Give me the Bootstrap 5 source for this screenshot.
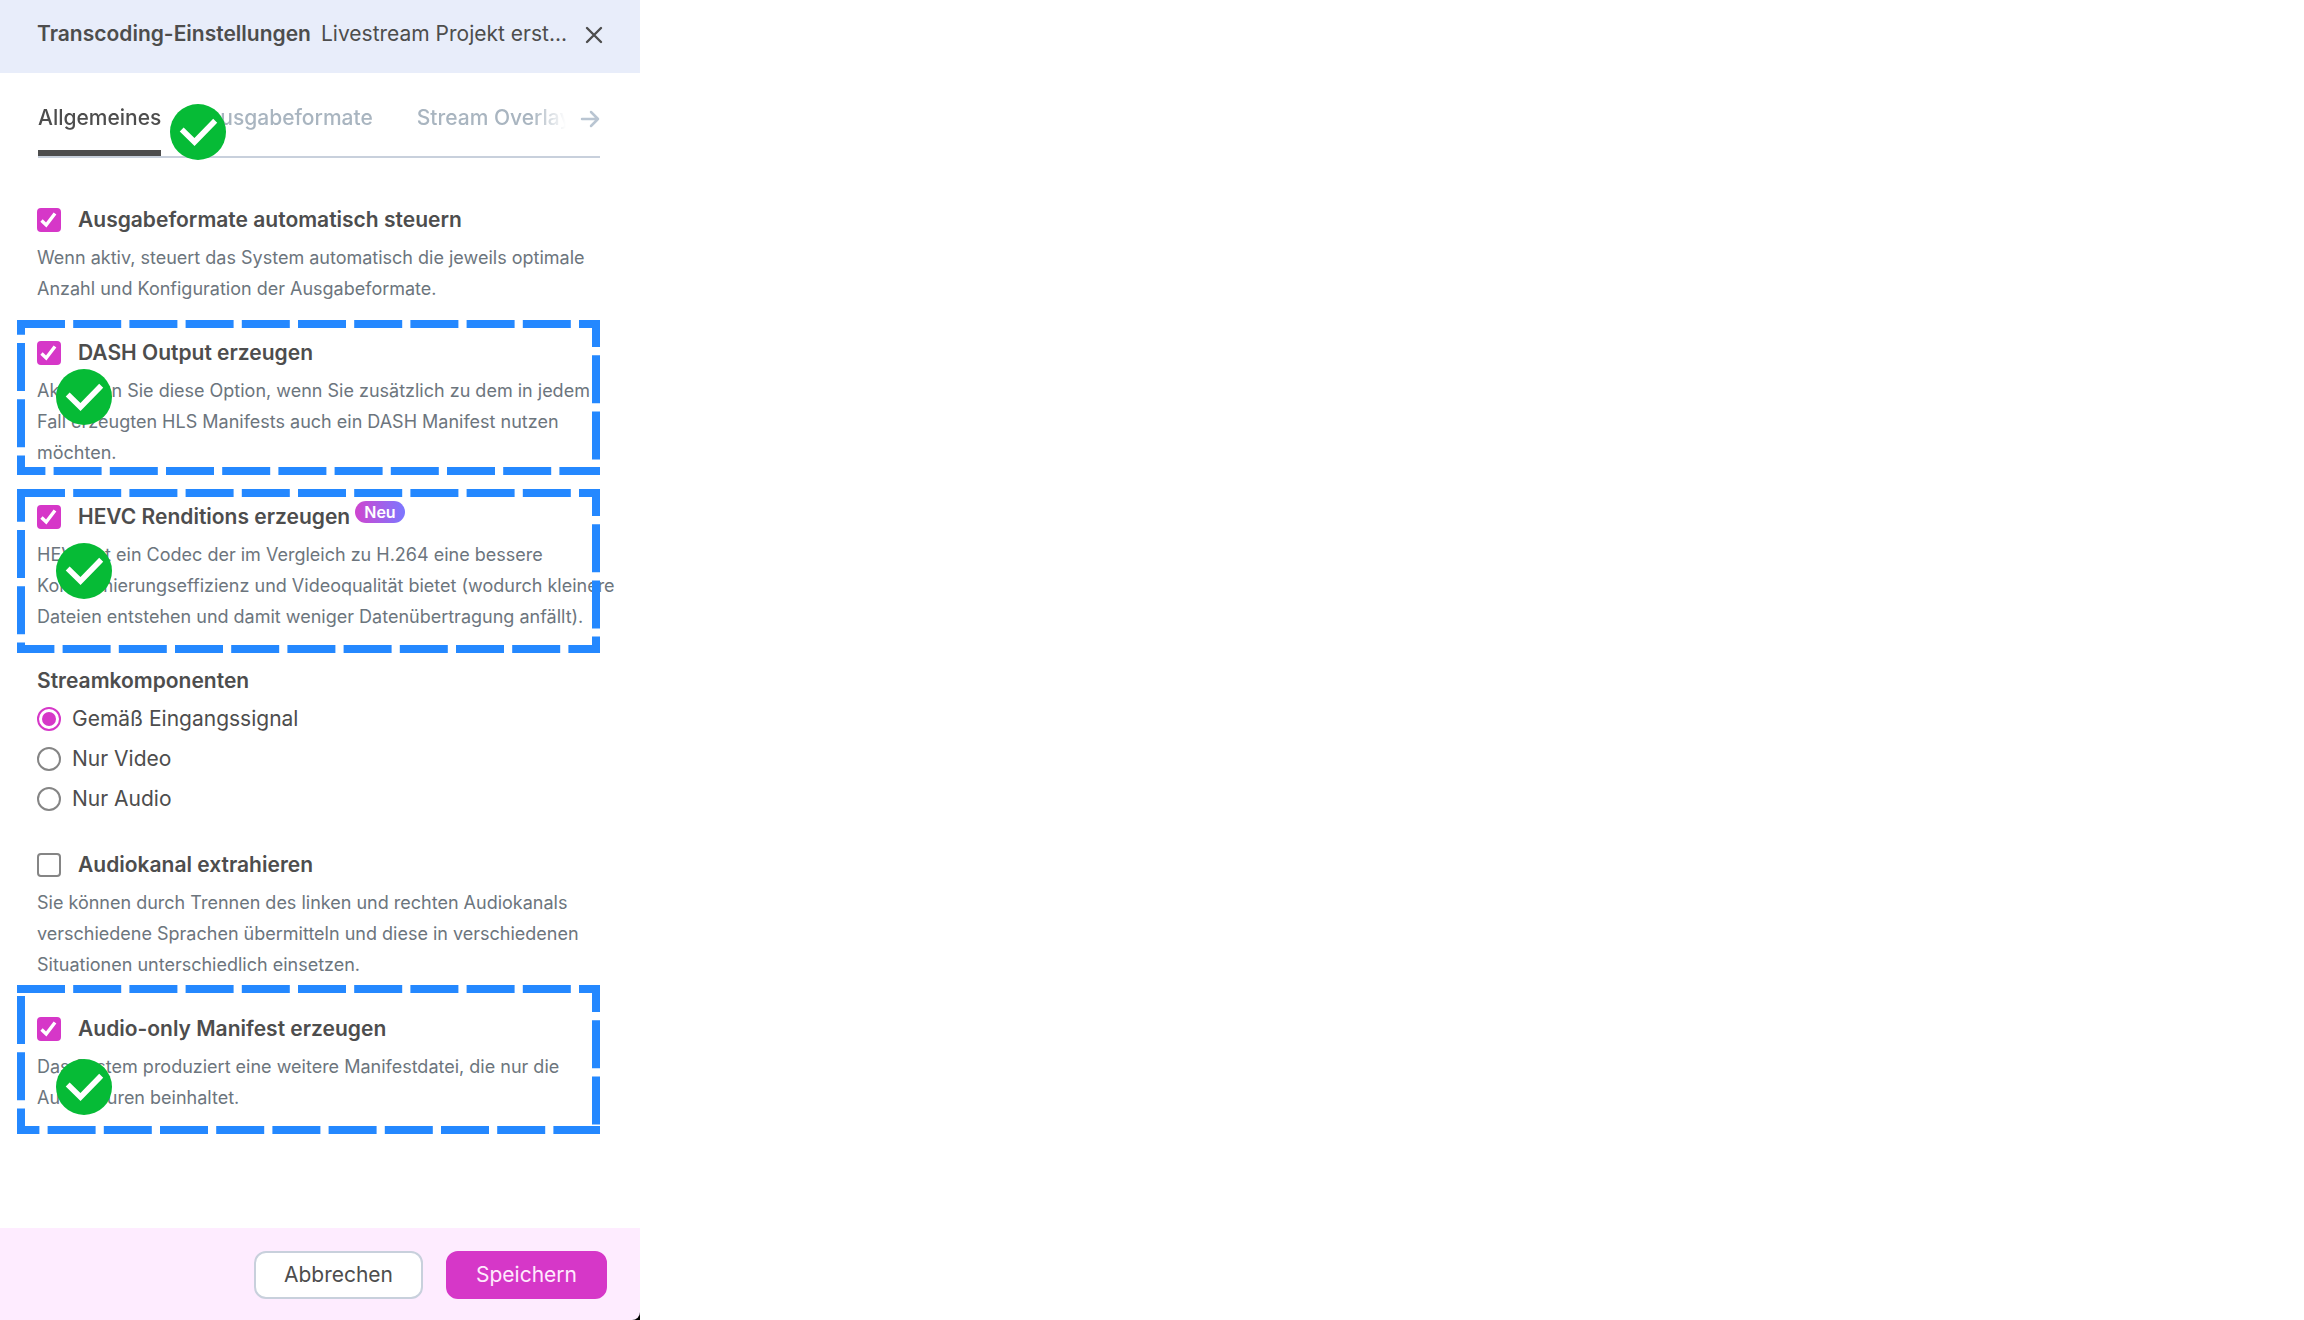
<!DOCTYPE html>
<html lang="de">
<head>
<meta charset="utf-8">
<meta name="viewport" content="width=device-width, initial-scale=1">
<title>Transcoding-Einstellungen</title>
<link href="https://cdn.jsdelivr.net/npm/bootstrap@5.3.0/dist/css/bootstrap.min.css" rel="stylesheet">
<style>
  :root { --ink: #4d4d4d; --muted: #6c757d; --pink: #d637c8; --line: #c8d0dc; }
  body { font-family: Inter, "Liberation Sans", sans-serif; font-size: 21px; line-height: 32px; color: var(--ink); background: #fff; }
  .settings-panel { max-width: 640px; }
  .panel-head { background: #e8edfa; padding: 18px 36px 23px 37px; gap: 10px; }
  .panel-head h1 { font-size: 21px; line-height: 32px; }
  .icon-btn { color: var(--ink); line-height: 0; }
  .tab-strip { margin: 25px 40px 0 38px; border-bottom: 2px solid var(--line); white-space: nowrap; }
  .tab-strip .nav-link { padding: 4px 0 16px; font-weight: 500; color: #a9b5c0; border-bottom: 6px solid transparent; }
  .tab-strip .nav-link.active { color: var(--ink); border-color: #4d4d4d; }
  .tab-clip { gap: 44px; flex: 1 1 0; min-width: 0; overflow: hidden; -webkit-mask-image: linear-gradient(to left, transparent 34px, #000 68px); mask-image: linear-gradient(to left, transparent 34px, #000 68px); }
  .tab-next { color: #b9c5d2; padding: 4px 0 23px; }
  .panel-main { padding: 46px 22px 96px 37px; }
  .option { margin-bottom: 33px; }
  .option p { margin: 6px 0 0; font-size: 18px; line-height: 31px; color: var(--muted); }
  .option-row { gap: 17px; }
  .choice-row { gap: 11px; margin-bottom: 8px; }
  .choices { margin-bottom: 34px; }
  .choices legend { font-size: 21px; line-height: 32px; margin-bottom: 6px; float: none; }
  .form-check-input { width: 24px; height: 24px; margin: 0; flex: none; border: 2px solid #858585; }
  .form-check-input[type=checkbox] { border-radius: 4px; }
  .form-check-input:checked { background-color: var(--pink); border-color: var(--pink); }
  .form-check-input:checked[type=checkbox] { background-size: 24px 24px; background-image: url("data:image/svg+xml,%3Csvg xmlns='http://www.w3.org/2000/svg' viewBox='0 0 24 24'%3E%3Cpath d='M4.500 12.500l4.700 4.500L18 5.500' fill='none' stroke='%23fff' stroke-width='3.400'/%3E%3C/svg%3E"); }
  .form-check-input:checked[type=radio] { background-color: #fff; background-size: 24px 24px; background-image: url("data:image/svg+xml,%3Csvg xmlns='http://www.w3.org/2000/svg' viewBox='0 0 24 24'%3E%3Ccircle cx='12' cy='12' r='7' fill='%23d637c8'/%3E%3C/svg%3E"); }
  .new-pill { font-size: 16px; line-height: 22px; padding: 0 9px; margin: -11px 0 0 -12px; background: linear-gradient(90deg, #cf45cf, #7c77ff); }
  .frame { left: -20px; width: 583px; max-width: calc(100% + 20px); pointer-events: none; }
  .frame rect { fill: none; stroke: #2488ff; stroke-width: 16; stroke-dasharray: 48 8.2; }
  .frame-dash { top: -17px; height: 155px; }
  .frame-hevc { top: -12px; height: 164px; }
  .frame-audio { top: -28px; height: 149px; }
  .tick { width: 56px; height: 56px; left: 19px; }
  .tick-dash { top: 32px; }
  .tick-hevc { top: 42px; }
  .tick-audio { top: 46px; }
  .tick-tab { left: 132px; top: 6px; }
  .panel-foot { background: #000; }
  .foot-bar { background: #feecff; border-bottom-right-radius: 8px; padding: 23px 33px 21px; gap: 23px; }
  .foot-bar .btn { font-size: 21px; line-height: 30px; padding: 7px 28px; border: 2px solid var(--line); border-radius: 12px; color: var(--ink); background: #fff; }
  .foot-bar .btn-save { color: #ffeafd; background: var(--pink); border-color: var(--pink); }
</style>
</head>
<body>
<svg class="d-none" xmlns="http://www.w3.org/2000/svg">
  <symbol id="tick" viewBox="0 0 56 56"><circle cx="28" cy="28" r="28" fill="#06bb36"/><path d="M11.700 25.500L24.500 38L45.200 16.700" fill="none" stroke="#fff" stroke-width="5.600"/></symbol>
</svg>
<div class="settings-panel d-flex flex-column min-vh-100">
  <header class="panel-head d-flex align-items-center">
    <h1 class="fw-semibold mb-0">Transcoding-Einstellungen</h1>
    <span class="text-truncate">Livestream Projekt erst...</span>
    <button type="button" class="icon-btn btn p-0 border-0 ms-auto" aria-label="Schließen">
      <svg width="20" height="20" viewBox="0 0 20 20" fill="none" stroke="currentColor" stroke-width="2.400" stroke-linecap="round"><path d="M3 4L17 18M17 4L3 18"/></svg>
    </button>
  </header>

  <nav class="tab-strip d-flex position-relative">
    <div class="tab-clip d-flex">
      <a class="nav-link active" href="#allgemein">Allgemeines</a>
      <a class="nav-link" href="#formate">Ausgabeformate</a>
      <a class="nav-link" href="#overlays">Stream Overlay</a>
    </div>
    <button type="button" class="tab-next btn border-0 d-flex align-items-center position-absolute end-0 top-0" aria-label="Weitere Tabs">
      <svg width="20" height="31" viewBox="0 0 20 31" fill="none" stroke="currentColor" stroke-width="2.500" stroke-linecap="round" stroke-linejoin="round"><path d="M2 17H18M11 10L18 17L11 24"/></svg>
    </button>
    <svg class="tick tick-tab position-absolute"><use href="#tick"/></svg>
  </nav>

  <main class="panel-main" id="allgemein">
    <section class="option">
      <div class="option-row d-flex align-items-center">
        <input class="form-check-input" type="checkbox" id="auto" checked>
        <label class="fw-semibold" for="auto">Ausgabeformate automatisch steuern</label>
      </div>
      <p>Wenn aktiv, steuert das System automatisch die jeweils optimale Anzahl und Konfiguration der Ausgabeformate.</p>
    </section>

    <section class="option position-relative">
      <div class="option-row d-flex align-items-center">
        <input class="form-check-input" type="checkbox" id="dash" checked>
        <label class="fw-semibold" for="dash">DASH Output erzeugen</label>
      </div>
      <p>Aktivieren Sie diese Option, wenn Sie zusätzlich zu dem in jedem Fall erzeugten HLS Manifests auch ein DASH Manifest nutzen möchten.</p>
      <svg class="frame frame-dash position-absolute"><rect width="100%" height="100%"/></svg>
      <svg class="tick tick-dash position-absolute"><use href="#tick"/></svg>
    </section>

    <section class="option position-relative">
      <div class="option-row d-flex align-items-center">
        <input class="form-check-input" type="checkbox" id="hevc" checked>
        <label class="fw-semibold" for="hevc">HEVC Renditions erzeugen</label>
        <span class="new-pill rounded-pill text-white fw-semibold">Neu</span>
      </div>
      <p>HEVC ist ein Codec der im Vergleich zu H.264 eine bessere Komprimierungseffizienz und Videoqualität bietet (wodurch kleinere Dateien entstehen und damit weniger Datenübertragung anfällt).</p>
      <svg class="frame frame-hevc position-absolute"><rect width="100%" height="100%"/></svg>
      <svg class="tick tick-hevc position-absolute"><use href="#tick"/></svg>
    </section>

    <fieldset class="choices">
      <legend class="fw-semibold">Streamkomponenten</legend>
      <div class="choice-row d-flex align-items-center">
        <input class="form-check-input" type="radio" name="parts" id="parts-input" checked>
        <label for="parts-input">Gemäß Eingangssignal</label>
      </div>
      <div class="choice-row d-flex align-items-center">
        <input class="form-check-input" type="radio" name="parts" id="parts-video">
        <label for="parts-video">Nur Video</label>
      </div>
      <div class="choice-row d-flex align-items-center mb-0">
        <input class="form-check-input" type="radio" name="parts" id="parts-audio">
        <label for="parts-audio">Nur Audio</label>
      </div>
    </fieldset>

    <section class="option">
      <div class="option-row d-flex align-items-center">
        <input class="form-check-input" type="checkbox" id="extract">
        <label class="fw-semibold" for="extract">Audiokanal extrahieren</label>
      </div>
      <p>Sie können durch Trennen des linken und rechten Audiokanals verschiedene Sprachen übermitteln und diese in verschiedenen Situationen unterschiedlich einsetzen.</p>
    </section>

    <section class="option position-relative mb-0">
      <div class="option-row d-flex align-items-center">
        <input class="form-check-input" type="checkbox" id="audio-only" checked>
        <label class="fw-semibold" for="audio-only">Audio-only Manifest erzeugen</label>
      </div>
      <p>Das System produziert eine weitere Manifestdatei, die nur die Audiospuren beinhaltet.</p>
      <svg class="frame frame-audio position-absolute"><rect width="100%" height="100%"/></svg>
      <svg class="tick tick-audio position-absolute"><use href="#tick"/></svg>
    </section>
  </main>

  <footer class="panel-foot mt-auto">
    <div class="foot-bar d-flex justify-content-end">
      <button type="button" class="btn">Abbrechen</button>
      <button type="button" class="btn btn-save">Speichern</button>
    </div>
  </footer>
</div>
<script src="https://cdn.jsdelivr.net/npm/bootstrap@5.3.0/dist/js/bootstrap.bundle.min.js"></script>
</body>
</html>
